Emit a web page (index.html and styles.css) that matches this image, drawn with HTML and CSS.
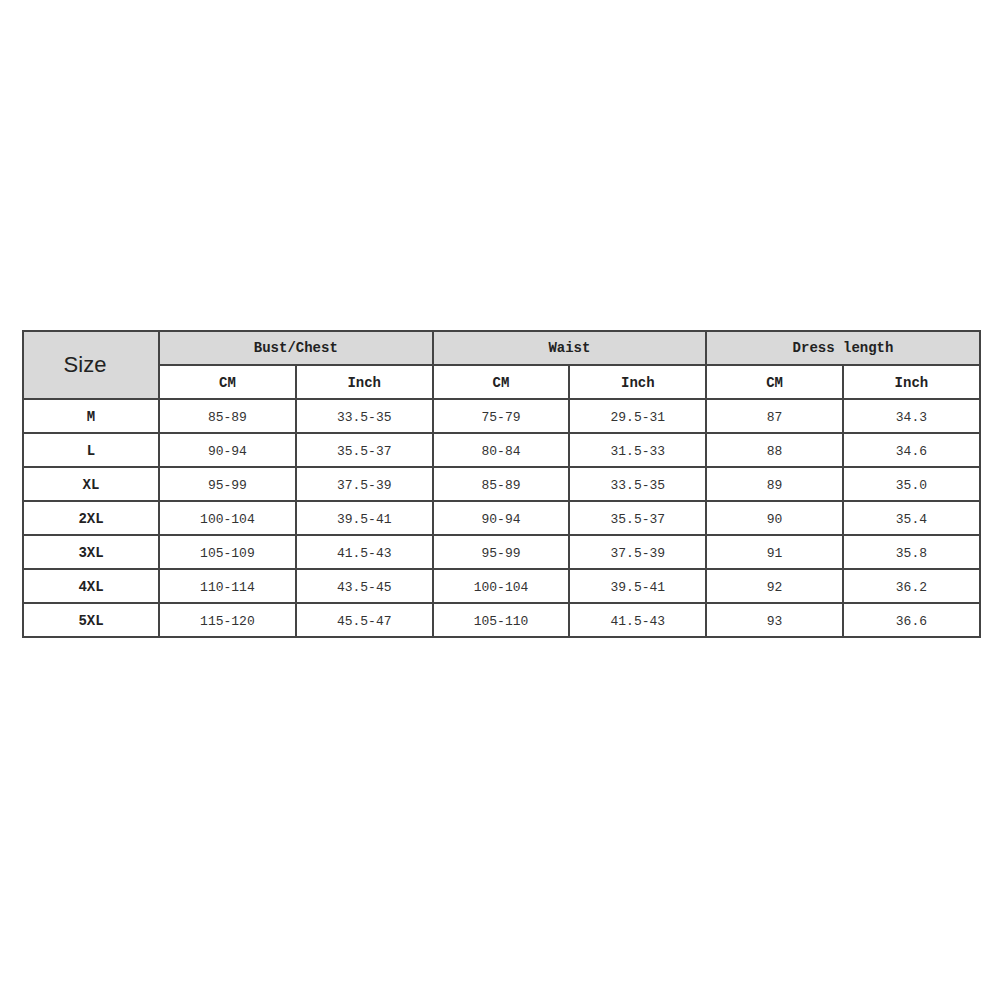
FILE: index.html
```html
<!DOCTYPE html>
<html>
<head>
<meta charset="utf-8">
<link rel="stylesheet" href="styles.css">
</head>
<body>
<div class="page">
  <table class="sizes">
    <colgroup>
      <col class="c-size"><col class="c"><col class="c"><col class="c"><col class="c"><col class="c"><col class="c">
    </colgroup>
    <thead>
      <tr class="group">
        <th class="size-head" rowspan="2">Size</th>
        <th colspan="2">Bust/Chest</th>
        <th colspan="2">Waist</th>
        <th colspan="2">Dress length</th>
      </tr>
      <tr class="units">
        <th>CM</th><th>Inch</th><th>CM</th><th>Inch</th><th>CM</th><th>Inch</th>
      </tr>
    </thead>
    <tbody>
      <tr><th>M</th><td>85-89</td><td>33.5-35</td><td>75-79</td><td>29.5-31</td><td>87</td><td>34.3</td></tr>
      <tr><th>L</th><td>90-94</td><td>35.5-37</td><td>80-84</td><td>31.5-33</td><td>88</td><td>34.6</td></tr>
      <tr><th>XL</th><td>95-99</td><td>37.5-39</td><td>85-89</td><td>33.5-35</td><td>89</td><td>35.0</td></tr>
      <tr><th>2XL</th><td>100-104</td><td>39.5-41</td><td>90-94</td><td>35.5-37</td><td>90</td><td>35.4</td></tr>
      <tr><th>3XL</th><td>105-109</td><td>41.5-43</td><td>95-99</td><td>37.5-39</td><td>91</td><td>35.8</td></tr>
      <tr><th>4XL</th><td>110-114</td><td>43.5-45</td><td>100-104</td><td>39.5-41</td><td>92</td><td>36.2</td></tr>
      <tr><th>5XL</th><td>115-120</td><td>45.5-47</td><td>105-110</td><td>41.5-43</td><td>93</td><td>36.6</td></tr>
    </tbody>
  </table>
</div>
</body>
</html>
```
FILE: styles.css
```css
html, body {
  margin: 0;
  padding: 0;
  background: #ffffff;
}

.page {
  padding: 330px 0 0 22px;
}

.sizes {
  border-collapse: collapse;
  table-layout: fixed;
  width: 957px;
  font-family: "Liberation Mono", "DejaVu Sans Mono", monospace;
  color: #333333;
}

.sizes .c-size { width: 136px; }
.sizes .c { width: 136.8px; }

.sizes th,
.sizes td {
  border: 2px solid #444444;
  height: 34px;
  padding: 0;
  text-align: center;
  vertical-align: middle;
  box-sizing: border-box;
}

.sizes th {
  font-weight: bold;
  font-size: 14px;
  color: #222222;
}

.sizes td {
  font-size: 13px;
  font-weight: normal;
  line-height: 16px;
  padding-top: 3px;
}

.sizes tbody th {
  line-height: 16px;
  padding-top: 2px;
}

.sizes .units th {
  padding-top: 2px;
}

.sizes .group th {
  background: #d9d9d9;
}

.sizes .size-head {
  background: #d9d9d9;
  font-family: "Liberation Sans", Arial, sans-serif;
  font-weight: normal;
  font-size: 22px;
  color: #222222;
  padding-right: 12px;
  padding-top: 0;
}
```
